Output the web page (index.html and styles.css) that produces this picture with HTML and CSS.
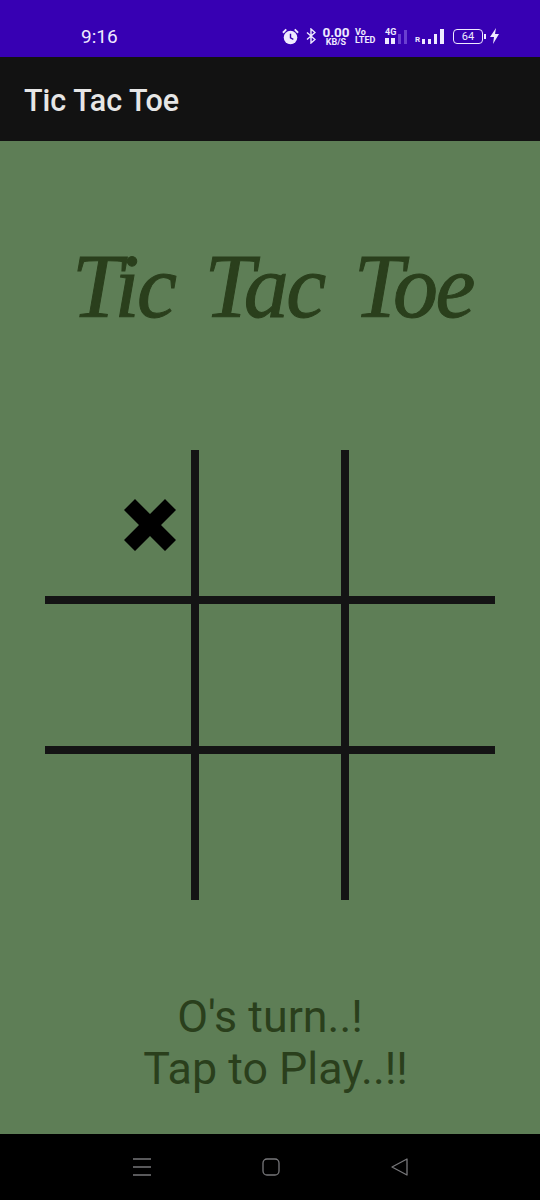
FILE: index.html
```html
<!DOCTYPE html>
<html lang="en">
<head>
  <meta charset="UTF-8" />
  <meta name="viewport" content="width=device-width, initial-scale=1" />
  <title>Tic Tac Toe</title>
  <link rel="stylesheet" href="styles.css">
</head>
<body>
  <div class="status-bar">
    <span class="clock">9:16</span>
    <div class="status-icons">
      <svg class="alarm" width="17" height="17" viewBox="0 0 18 18">
        <circle cx="9" cy="10" r="7.2" fill="#efeaff"/>
        <path d="M9 6v4.5l3 1.5" fill="none" stroke="#3700b3" stroke-width="1.5"/>
        <path d="M1 5l3.5-3.5M17 5l-3.5-3.5" stroke="#efeaff" stroke-width="2"/>
      </svg>
      <svg class="bt" width="10" height="16" viewBox="0 0 10 16">
        <path d="M1 4.5l8 7-4 3.5V1l4 3.5-8 7" fill="none" stroke="#efeaff" stroke-width="1.4"/>
      </svg>
      <div class="speed"><b>0.00</b><b class="small">KB/S</b></div>
      <div class="volte"><b>Vo</b><b>LTED</b></div>
      <div class="net">
        <b>4G</b>
        <svg width="22" height="7" viewBox="0 0 22 7">
          <rect x="0" y="1" width="4" height="6" fill="#efeaff"/>
          <rect x="6" y="1" width="4" height="6" fill="#efeaff"/>
        </svg>
        <svg class="net-dim" width="9" height="14" viewBox="0 0 9 14">
          <rect x="0" y="4" width="3" height="10" fill="#6a3fd0"/>
          <rect x="6" y="0" width="3" height="14" fill="#6a3fd0"/>
        </svg>
      </div>
      <b class="roam">R</b>
      <svg class="signal" width="22" height="16" viewBox="0 0 22 16">
        <rect x="0" y="10" width="3" height="5" fill="#efeaff"/>
        <rect x="6" y="10" width="3" height="5" fill="#efeaff"/>
        <rect x="12" y="5" width="3" height="10" fill="#efeaff"/>
        <rect x="18" y="0" width="4" height="15" fill="#efeaff"/>
      </svg>
      <div class="battery"><span>64</span></div>
      <svg class="bolt" width="10" height="16" viewBox="0 0 10 16">
        <path d="M6 0L0 9h4l-1 7 6-10H5z" fill="#efeaff"/>
      </svg>
    </div>
  </div>

  <header class="app-bar">Tic Tac Toe</header>

  <main class="game">
    <h1 class="title">Tic Tac Toe</h1>

    <div class="board">
      <div class="cell first">
        <svg class="mark" width="54" height="54" viewBox="0 0 54 54">
          <path d="M12 1L27 16 42 1 53 12 38 27 53 42 42 53 27 38 12 53 1 42 16 27 1 12z" fill="#000"/>
        </svg>
      </div>
      <div class="cell"></div>
      <div class="cell"></div>
      <div class="cell"></div>
      <div class="cell"></div>
      <div class="cell"></div>
      <div class="cell"></div>
      <div class="cell"></div>
      <div class="cell"></div>
    </div>

    <p class="turn">O's turn..!<br>&nbsp;Tap to Play..!!</p>
  </main>

  <nav class="nav-bar">
    <svg width="20" height="20" viewBox="0 0 20 20">
      <path d="M1 2h18M1 10h18M1 18h18" stroke="#77777a" stroke-width="1.3"/>
    </svg>
    <svg width="20" height="20" viewBox="0 0 20 20">
      <rect x="2" y="2" width="16" height="16" rx="4" fill="none" stroke="#77777a" stroke-width="1.3"/>
    </svg>
    <svg width="20" height="20" viewBox="0 0 20 20">
      <path d="M2 10L17 2v16z" fill="none" stroke="#77777a" stroke-width="1.3" stroke-linejoin="round"/>
    </svg>
  </nav>
</body>
</html>
```

FILE: styles.css
```css
* {
  box-sizing: border-box;
}
body {
  margin: 0;
  width: 540px;
  height: 1200px;
  display: flex;
  flex-direction: column;
  font-family: Roboto, "Liberation Sans", sans-serif;
  overflow: hidden;
}
.status-bar {
  height: 57px;
  flex: none;
  background: #3700b3;
  color: #efeaff;
  display: flex;
  align-items: center;
  padding: 15px 40px 0 81px;
  justify-content: space-between;
}
.clock {
  font-size: 19px;
}
.status-icons {
  display: flex;
  align-items: center;
}
.bt {
  margin-left: 7px;
}
.speed {
  display: flex;
  flex-direction: column;
  align-items: center;
  width: 28px;
  margin-left: 6px;
  font-size: 13.5px;
  line-height: 12px;
}
.speed .small {
  font-size: 9px;
  line-height: 8px;
}
.volte {
  display: flex;
  flex-direction: column;
  width: 18px;
  margin-left: 5px;
  font-size: 9px;
  line-height: 8px;
  white-space: nowrap;
}
.net {
  position: relative;
  display: flex;
  flex-direction: column;
  width: 23px;
  margin-left: 12px;
  font-size: 9px;
  line-height: 9px;
}
.net-dim {
  position: absolute;
  left: 13px;
  top: 2px;
}
.roam {
  font-size: 8px;
  width: 7px;
  margin: 7px 0 0 7px;
}
.signal {
  margin-top: 1px;
}
.battery {
  position: relative;
  width: 30px;
  height: 15px;
  margin-left: 9px;
  border: 1px solid #efeaff;
  border-radius: 4px;
  font-size: 11px;
  line-height: 13px;
  text-align: center;
}
.battery::after {
  content: "";
  position: absolute;
  right: -4px;
  top: 4px;
  width: 2px;
  height: 5px;
  background: #efeaff;
}
.bolt {
  margin-left: 7px;
}
.app-bar {
  height: 84px;
  flex: none;
  background: #121212;
  color: #e6e6e6;
  font-size: 30.5px;
  font-weight: 500;
  line-height: 88px;
  padding-left: 24px;
}
.game {
  flex: 1;
  background: #5e7e56;
  display: flex;
  flex-direction: column;
  align-items: center;
}
.title {
  margin: 86px 0 0;
  height: 223px;
  padding-left: 5px;
  font-family: "Liberation Serif", serif;
  font-style: italic;
  font-weight: 400;
  font-size: 90px;
  letter-spacing: -2.5px;
  word-spacing: 10px;
  line-height: 120px;
  color: #2a3f1c;
  -webkit-text-stroke: 1px #2a3f1c;
}
.board {
  width: 450px;
  height: 450px;
  display: grid;
  grid-template-columns: 146px 142px 146px;
  grid-template-rows: 146px 142px 146px;
  gap: 8px;
  background: #141414;
}
.cell {
  background: #5e7e56;
  display: flex;
  align-items: center;
  justify-content: center;
}
.cell.first {
  justify-content: flex-end;
  padding: 3px 14px 0 0;
}
.turn {
  margin: 91px 0 0;
  font-size: 44.8px;
  line-height: 52px;
  color: #2a3f1c;
  text-align: center;
}
.nav-bar {
  height: 66px;
  flex: none;
  background: #000;
  display: flex;
  justify-content: center;
  align-items: center;
  gap: 109px;
  padding-left: 2px;
}
```
